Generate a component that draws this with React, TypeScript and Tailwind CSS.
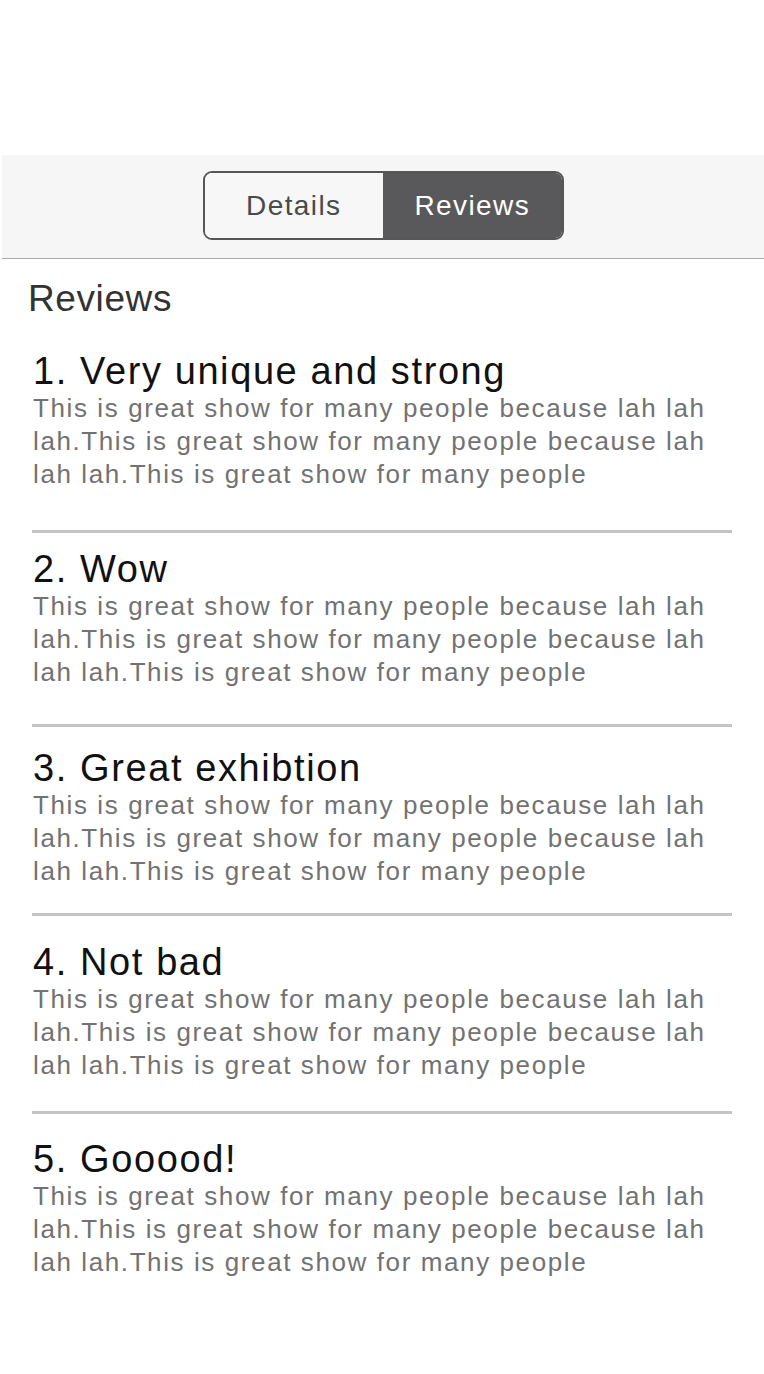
import React, { useState } from "react";

type Review = {
	title: string;
	body: string;
	// spacing tweaks so the list lines up with the mock
	top: string;
	bottom: string;
};

const BODY =
	"This is great show for many people because lah lah lah.This is great show for many people because lah lah lah.This is great show for many people";

const REVIEWS: Review[] = [
	{ title: "1. Very unique and strong", body: BODY, top: "mt-[29px]", bottom: "pb-[39px]" },
	{ title: "2. Wow", body: BODY, top: "mt-[15px]", bottom: "pb-[35px]" },
	{ title: "3. Great exhibtion", body: BODY, top: "mt-[20px]", bottom: "pb-[25px]" },
	{ title: "4. Not bad", body: BODY, top: "mt-[25px]", bottom: "pb-[29px]" },
	{ title: "5. Gooood!", body: BODY, top: "mt-[24px]", bottom: "pb-[40px]" },
];

const App: React.FC = () => {
	const [tab, setTab] = useState<"details" | "reviews">("reviews");

	return (
		<div
			className="w-[764px] bg-white"
			style={{ fontFamily: '"Liberation Sans", Arial, sans-serif' }}>
			{/* Segmented header */}
			<div className="ml-[2px] mt-[155px] flex h-[104px] items-start justify-center border-b border-[#acacac] bg-[#f6f6f6] pt-[16px]">
				<div className="flex h-[69px] w-[361px] overflow-hidden rounded-[9px] border-2 border-[#565656]">
					<button
						type="button"
						onClick={() => setTab("details")}
						className={
							tab === "details"
								? "flex-1 bg-[#59595b] text-[28px] tracking-[1.4px] text-white"
								: "flex-1 bg-[#f7f7f7] text-[28px] tracking-[1.4px] text-[#4a4a4a]"
						}>
						Details
					</button>
					<button
						type="button"
						onClick={() => setTab("reviews")}
						className={
							tab === "reviews"
								? "flex-1 bg-[#59595b] text-[28px] tracking-[1.4px] text-white"
								: "flex-1 bg-[#f7f7f7] text-[28px] tracking-[1.4px] text-[#4a4a4a]"
						}>
						Reviews
					</button>
				</div>
			</div>

			{/* Reviews */}
			<div className="px-[28px] pt-[18px]">
				<h2 className="text-[37px] leading-[44px] tracking-[0.6px] text-[#333]">
					Reviews
				</h2>
			</div>

			<div className="px-[32px]">
				{REVIEWS.map((r, i) => (
					<div
						key={r.title}
						className={
							i < REVIEWS.length - 1
								? `${r.top} ${r.bottom} border-b-[3px] border-[#c4c4c4]`
								: `${r.top} ${r.bottom}`
						}>
						<h3 className="pl-[1px] text-[38px] leading-[42px] tracking-[1.6px] text-[#111]">
							{r.title}
						</h3>
						<p className="pl-[1px] pr-[14px] text-[26px] leading-[33px] tracking-[1.6px] text-[#727272]">
							{r.body}
						</p>
					</div>
				))}
			</div>
		</div>
	);
};

export default App;
